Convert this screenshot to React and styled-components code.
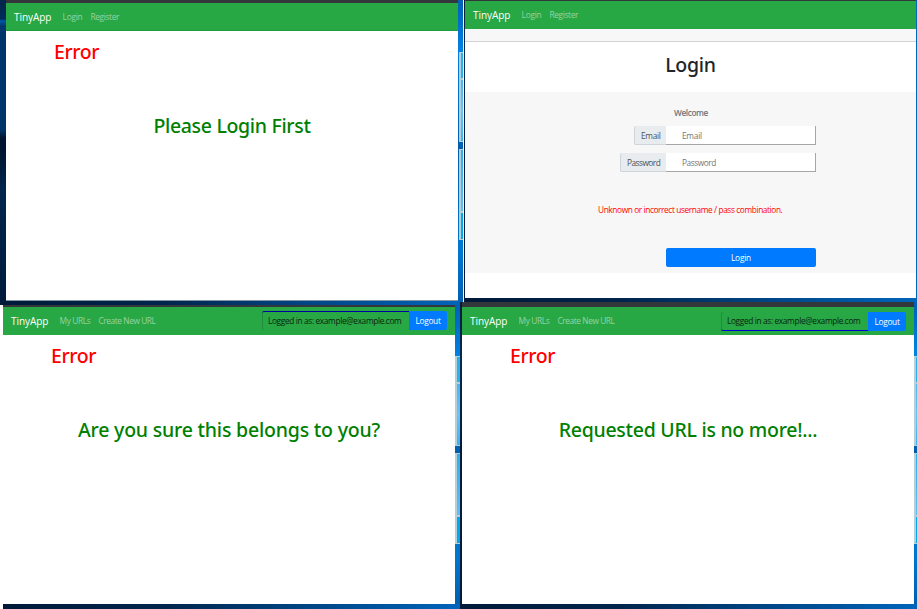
import React from "react";
import styled, { createGlobalStyle, css } from "styled-components";

const GlobalStyle = createGlobalStyle`
  * { box-sizing: border-box; }
  body {
    margin: 0;
    background: #fff;
    font-family: "Open Sans", "Noto Sans", sans-serif;
    font-size: 8.3px;
    line-height: 12px;
    color: #212529;
    overflow: hidden;
  }
`;

const Gallery = styled.main`
  width: 917px;
  height: 609px;
  overflow: hidden;
`;

const TopRow = styled.section`
  display: flex;
  align-items: flex-start;
  gap: 1px;
  height: 305px;
`;

const BottomRow = styled.section`
  display: flex;
  align-items: flex-end;
  height: 307px;
  margin-top: -3px;
  padding-left: 3px;
`;

/* Desktop wallpaper surrounding each browser window */
const Desktop = styled.div`
  display: grid;
  flex: none;
  width: ${(p) => p.$width}px;
  height: ${(p) => p.$height}px;
  grid-template-columns: ${(p) => p.$left}px minmax(0, 1fr) ${(p) => p.$right}px;
  grid-template-rows: minmax(0, 1fr) ${(p) => p.$bottom}px;
  background: linear-gradient(90deg, #001a38 0%, #00254c 35%, #004482 65%, #0065bb 100%);
`;

const LeftEdge = styled.div`
  background: ${(p) =>
    p.$glow
      ? "linear-gradient(#00254a 0, #002c58 19px, #0057a8 21px, #00356d 26px, #003568 130px, #001430 138px, #001430 150px, #00254c 190px, #001b3b 100%)"
      : "linear-gradient(#0a1c30, #002851 20%, #001938 50%, #001a38)"};
`;

const Window = styled.div`
  display: flex;
  flex-direction: column;
  background: #fff;
  border-top: ${(p) => p.$chrome}px solid #33363a;
  border-bottom: ${(p) => (p.$edge ? "1px solid #8298a8" : "0")};
`;

const Strip = styled.div`
  display: flex;
  flex-direction: column;
  padding-top: ${(p) => p.$offset}px;
  padding-left: ${(p) => p.$inset || 0}px;
  background: linear-gradient(#0060b5, #0082e0 50px, #005eae 150px, #0078d0 250px, #005fb0);
`;

const Pane = styled.div`
  flex: none;
  height: ${(p) => p.$height}px;
  margin-bottom: ${(p) => p.$gap || 0}px;
  border: solid #b5cfd6;
  border-width: 1px 0 1px ${(p) => p.$frame}px;
  background: ${(p) => p.$fill};
`;

const Navbar = styled.nav`
  display: flex;
  align-items: center;
  flex: none;
  height: 28px;
  padding: 0 8px;
  background: #28a745;
  border-bottom: ${(p) => (p.$edge ? "1px solid #1f9a3c" : "0")};
`;

const Brand = styled.span`
  width: 48.5px;
  font-size: 10px;
  line-height: 14px;
  letter-spacing: -0.05px;
  color: #fff;
`;

const NavLink = styled.span`
  margin-right: 8px;
  letter-spacing: ${(p) => p.$tracking}px;
  color: rgba(255, 255, 255, 0.5);
  white-space: nowrap;
`;

const Session = styled.div`
  display: flex;
  align-self: flex-start;
  height: 19px;
  margin-top: ${(p) => (p.$rule === "top" ? 4 : 5)}px;
  margin-left: auto;
`;

const SessionLabel = styled.div`
  width: 147px;
  padding-left: 6px;
  letter-spacing: -0.35px;
  color: #08250f;
  white-space: nowrap;
  border-radius: 2px 0 0 2px;
  box-shadow: inset 1px 0 0 #218c3c;
  ${(p) =>
    p.$rule === "top"
      ? css`border-top: 1px solid #0000a0; line-height: 18px;`
      : css`border-bottom: 1px solid #0000d0; line-height: 18px;`}
`;

const Logout = styled.button`
  width: 38px;
  padding: 0;
  border: 0;
  border-radius: 0 2px 2px 0;
  background: #007bff;
  color: #fff;
  font: inherit;
  letter-spacing: -0.28px;
`;

const ErrorBody = styled.div`
  display: flex;
  flex-direction: column;
  padding-top: 9px;
  gap: 50px;
`;

const Heading = styled.h1`
  margin: 0;
  font-family: "Noto Sans", "Open Sans", sans-serif;
  font-size: 19.5px;
  font-weight: 550;
  line-height: 24px;
`;

const ErrorTitle = styled(Heading)`
  margin-left: 48px;
  letter-spacing: -0.4px;
  color: red;
`;

const ErrorMessage = styled(Heading)`
  letter-spacing: ${(p) => p.$tracking}px;
  text-align: center;
  color: green;
`;

const Spacer = styled.div`
  flex: none;
  height: 13px;
  background: #f7f7f7;
  border-bottom: 1px solid #d2d3d4;
`;

const LoginTitle = styled(Heading)`
  flex: none;
  height: 50px;
  padding-top: 11px;
  letter-spacing: -0.25px;
  text-align: center;
`;

const LoginForm = styled.form`
  display: flex;
  flex-direction: column;
  align-items: flex-end;
  height: 181px;
  padding: 15px 100px 0 0;
  background: #f7f7f7;
`;

const Welcome = styled.p`
  width: 251px;
  margin: 0 0 7px;
  padding-left: 109px;
  font-weight: 600;
  letter-spacing: -0.42px;
  color: #6c757d;
`;

const Field = styled.label`
  display: flex;
  height: 19px;
  margin-bottom: 8px;
`;

const FieldLabel = styled.span`
  width: ${(p) => p.$width}px;
  padding-left: 6px;
  line-height: 19px;
  letter-spacing: ${(p) => p.$tracking}px;
  background: #e9ecef;
  border: solid #ced4da;
  border-width: 0 0 1px 1px;
  border-radius: 2px 0 0 2px;
  color: #495057;
`;

const FieldInput = styled.input`
  width: 150px;
  padding: 1px 0 0 16px;
  border: solid #a6a6a6;
  border-width: 0 1px 1px 0;
  border-radius: 0;
  background: #fff;
  font: inherit;
  letter-spacing: ${(p) => p.$tracking}px;
  outline: none;
  &::placeholder { color: #757575; opacity: 1; }
`;

const Warning = styled.p`
  width: 218px;
  margin: 24px 0 32px;
  letter-spacing: -0.39px;
  white-space: nowrap;
  color: red;
`;

const SubmitButton = styled.button`
  width: 150px;
  height: 19px;
  padding: 0;
  border: 0;
  border-radius: 2px;
  background: #007bff;
  color: #fff;
  font: inherit;
  letter-spacing: -0.2px;
`;

function LogoStrip({ offset, inset, frame }) {
  return (
    <Strip $offset={offset} $inset={inset}>
      <Pane $height={27} $frame={frame} $fill="#2bb0ee" />
      <Pane $height={63} $gap={7} $frame={frame} $fill="linear-gradient(#4db4ee, #6ac4f5 50%, #3bb2f0)" />
      <Pane $height={63} $frame={frame} $fill="linear-gradient(#2caeed, #62bdf2)" />
      <Pane $height={28} $frame={frame} $fill="#00a9ee" />
    </Strip>
  );
}

function GuestLinks() {
  return (
    <>
      <Brand>TinyApp</Brand>
      <NavLink $tracking={-0.2}>Login</NavLink>
      <NavLink $tracking={-0.35}>Register</NavLink>
    </>
  );
}

function MemberNav({ rule }) {
  return (
    <Navbar>
      <Brand>TinyApp</Brand>
      <NavLink $tracking={-0.33}>My URLs</NavLink>
      <NavLink $tracking={-0.4}>Create New URL</NavLink>
      <Session $rule={rule}>
        <SessionLabel $rule={rule}>Logged in as: example@example.com</SessionLabel>
        <Logout>Logout</Logout>
      </Session>
    </Navbar>
  );
}

export default function App() {
  return (
    <Gallery>
      <GlobalStyle />
      <TopRow>
        <Desktop $width={463} $height={305} $left={6} $right={5} $bottom={4}>
          <LeftEdge $glow />
          <Window $chrome={3} $edge>
            <Navbar $edge><GuestLinks /></Navbar>
            <ErrorBody>
              <ErrorTitle>Error</ErrorTitle>
              <ErrorMessage as="h2" $tracking={-0.32}>Please Login First</ErrorMessage>
            </ErrorBody>
          </Window>
          <LogoStrip offset={52} inset={1} frame={2} />
        </Desktop>
        <Desktop $width={453} $height={302} $left={1} $right={1} $bottom={4}>
          <LeftEdge />
          <Window $chrome={1}>
            <Navbar><GuestLinks /></Navbar>
            <Spacer />
            <LoginTitle>Login</LoginTitle>
            <LoginForm>
              <Welcome>Welcome</Welcome>
              <Field>
                <FieldLabel $width={32} $tracking={-0.3}>Email</FieldLabel>
                <FieldInput placeholder="Email" $tracking={-0.25} />
              </Field>
              <Field>
                <FieldLabel $width={46} $tracking={-0.52}>Password</FieldLabel>
                <FieldInput placeholder="Password" $tracking={-0.45} />
              </Field>
              <Warning>Unknown or incorrect username / pass combination.</Warning>
              <SubmitButton type="button">Login</SubmitButton>
            </LoginForm>
          </Window>
        </Desktop>
      </TopRow>
      <BottomRow>
        <Desktop $width={457} $height={304} $left={0} $right={5} $bottom={5}>
          <LeftEdge />
          <Window $chrome={2}>
            <MemberNav rule="top" />
            <ErrorBody>
              <ErrorTitle>Error</ErrorTitle>
              <ErrorMessage as="h2" $tracking={-0.2}>Are you sure this belongs to you?</ErrorMessage>
            </ErrorBody>
          </Window>
          <LogoStrip offset={51} frame={2} />
        </Desktop>
        <Desktop $width={457} $height={307} $left={2} $right={3} $bottom={5}>
          <LeftEdge />
          <Window $chrome={5}>
            <MemberNav rule="bottom" />
            <ErrorBody>
              <ErrorTitle>Error</ErrorTitle>
              <ErrorMessage as="h2" $tracking={-0.27}>Requested URL is no more!...</ErrorMessage>
            </ErrorBody>
          </Window>
          <LogoStrip offset={54} frame={2} />
        </Desktop>
      </BottomRow>
    </Gallery>
  );
}
